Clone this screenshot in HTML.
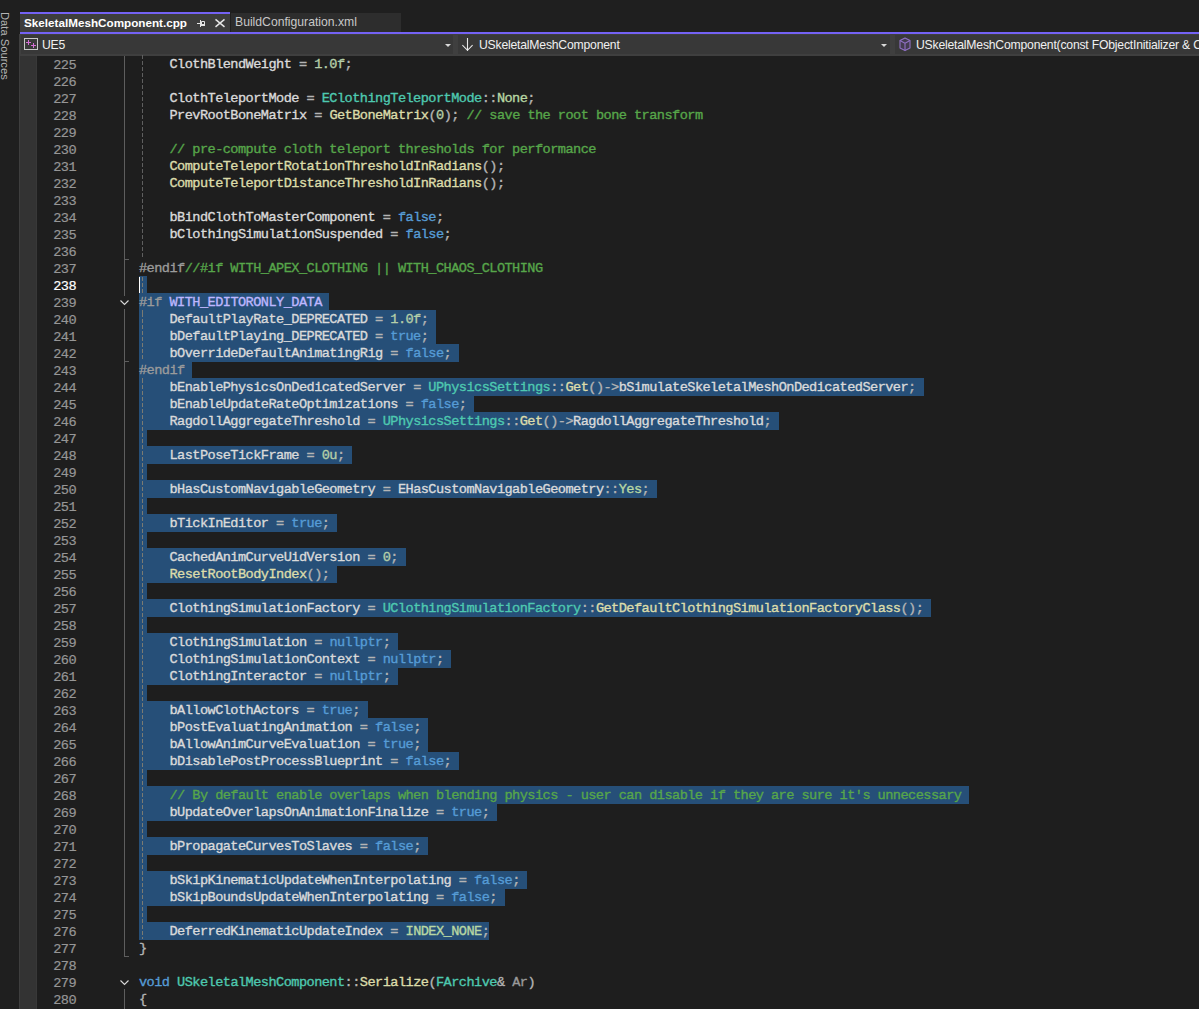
<!DOCTYPE html>
<html><head><meta charset="utf-8">
<style>
html,body{margin:0;padding:0;}
body{width:1199px;height:1009px;overflow:hidden;position:relative;background:#1f1f1f;font-family:"Liberation Sans",sans-serif;}
.abs{position:absolute;}
#side{position:absolute;left:0;top:0;width:19px;height:1009px;background:#1f1f1f;}
#side .vt{position:absolute;left:-29px;top:40px;width:68px;height:12px;transform:rotate(90deg);color:#b4b4b4;font-size:11.2px;line-height:12px;white-space:nowrap;}
#tabwell{position:absolute;left:19px;top:0;width:1180px;height:32px;background:#1f1f1f;}
#tab1{position:absolute;left:20px;top:12px;width:210px;height:20px;background:#3d3d3d;border-top:2px solid #7462f4;box-sizing:border-box;}
#tab1 .tt{position:absolute;left:4px;top:1px;font-size:11.7px;font-weight:bold;color:#ffffff;line-height:16px;white-space:nowrap;}
#tab2{position:absolute;left:231px;top:13px;width:170px;height:19px;background:#2d2d2d;}
#tab2 .tt{position:absolute;left:4px;top:1px;font-size:12.2px;color:#c8c8c8;line-height:16px;white-space:nowrap;}
#accent{position:absolute;left:20px;top:32px;width:1179px;height:2px;background:#7462f4;}
#toolbar{position:absolute;left:19px;top:34px;width:1180px;height:22px;background:#3f3f3f;}
.dd{position:absolute;top:1px;height:19px;background:#383838;}
.dd .tx{position:absolute;top:2px;font-size:12.2px;letter-spacing:-0.2px;color:#f0f0f0;line-height:16px;white-space:nowrap;}
.tri{position:absolute;top:9px;width:0;height:0;border-left:3px solid transparent;border-right:3px solid transparent;border-top:3px solid #d8d8d8;}
#margin{position:absolute;left:19px;top:56px;width:18px;height:953px;background:#333333;border-left:1px solid #3e3e3e;border-right:1px solid #383838;box-sizing:border-box;}
#editor{position:absolute;left:37px;top:56px;width:1162px;height:953px;background:#1e1e1e;}
.ln{position:absolute;left:39px;width:37px;text-align:right;height:17px;font-family:"Liberation Mono",monospace;font-size:13.6px;letter-spacing:-0.543px;line-height:17px;color:#969696;padding-top:2px;box-sizing:border-box;-webkit-text-stroke:0.2px;}
.ln.cur{color:#ffffff;}
.sel{position:absolute;left:139px;height:18px;background:#264f78;}
.cl{position:absolute;left:139px;height:17px;font-family:"Liberation Mono",monospace;font-size:13.6px;letter-spacing:-0.543px;line-height:17px;white-space:pre;color:#dadada;padding-top:1px;box-sizing:border-box;-webkit-text-stroke:0.35px;}
.i{color:#dadada}.p{color:#b4b4b4}.n{color:#b5cea8}.t{color:#4ec9b0}.e{color:#b8d7a3}.f{color:#dcdcaa}.c{color:#57a64a}.k{color:#569cd6}.pp{color:#9b9b9b}.m{color:#beb7ff}.m2{color:#b8d7a3}.pa{color:#9a9a9a}
.guide{position:absolute;left:142px;width:1px;}
.oline{position:absolute;left:124px;width:1px;background:#5e5e5e;}
.otick{position:absolute;left:124px;width:5px;height:1px;background:#5e5e5e;}
#cursor{position:absolute;left:139px;top:277px;width:1px;height:16px;background:#ffffff;}
</style></head><body>
<div id="side"><div class="vt">Data Sources</div></div>
<div id="tabwell"></div>
<div id="tab1"><div class="tt">SkeletalMeshComponent.cpp</div>
<svg class="abs" style="left:176px;top:5px" width="10" height="9" viewBox="0 0 10 9"><path d="M1 4.5H4M4.5 1V8M5.5 2.5H8.5V6.5H5.5Z" fill="none" stroke="#e6e6e6" stroke-width="1"/><rect x="5" y="5" width="4" height="2" fill="#e6e6e6"/></svg>
<svg class="abs" style="left:194px;top:4px" width="12" height="10" viewBox="0 0 12 10"><path d="M1.5 1.3L10.5 8.8M10.5 1.3L1.5 8.8" fill="none" stroke="#e6e6e6" stroke-width="1.5"/></svg>
</div>
<div id="tab2"><div class="tt">BuildConfiguration.xml</div></div>
<div id="accent"></div>
<div id="toolbar">
 <div class="dd" style="left:2px;width:432px">
  <svg class="abs" style="left:3px;top:3px" width="14" height="12" viewBox="0 0 14 12"><rect x="0.5" y="0.5" width="13" height="11" fill="#3a3a3a" stroke="#c8c8c8" stroke-width="1"/><path d="M4.5 2V7M2 4.5H7M9.5 5V10M7 7.5H12" stroke="#d670d6" stroke-width="1"/></svg>
  <div class="tx" style="left:21px">UE5</div>
  <div class="tri" style="left:424px"></div>
 </div>
 <div class="dd" style="left:439px;width:432px">
  <svg class="abs" style="left:4px;top:3px" width="12" height="14" viewBox="0 0 12 14"><path d="M5.5 0V13M0.4 7.2L5.5 12.3L10.6 7.2" fill="none" stroke="#e8e8e8" stroke-width="1.1"/></svg>
  <div class="tx" style="left:21px">USkeletalMeshComponent</div>
  <div class="tri" style="left:423px"></div>
 </div>
 <div class="dd" style="left:876px;width:320px">
  <svg class="abs" style="left:3px;top:2px" width="14" height="15" viewBox="0 0 14 15"><path d="M7 1L12 3.6V11L7 13.6L2 11V3.6Z" fill="#433c50" stroke="#9070c4" stroke-width="1.1" stroke-linejoin="round"/><path d="M2 3.6L7 6.2L12 3.6M7 6.2V13.6" fill="none" stroke="#9070c4" stroke-width="1.1" stroke-linejoin="round"/></svg>
  <div class="tx" style="left:21px">USkeletalMeshComponent(const FObjectInitializer &amp; ObjectInitializer)</div>
 </div>
</div>
<div id="margin"></div>
<div id="editor"></div>
<div class="ln" style="top:55px">225</div>
<div class="ln" style="top:72px">226</div>
<div class="ln" style="top:89px">227</div>
<div class="ln" style="top:106px">228</div>
<div class="ln" style="top:123px">229</div>
<div class="ln" style="top:140px">230</div>
<div class="ln" style="top:157px">231</div>
<div class="ln" style="top:174px">232</div>
<div class="ln" style="top:191px">233</div>
<div class="ln" style="top:208px">234</div>
<div class="ln" style="top:225px">235</div>
<div class="ln" style="top:242px">236</div>
<div class="ln" style="top:259px">237</div>
<div class="ln cur" style="top:276px">238</div>
<div class="ln" style="top:293px">239</div>
<div class="ln" style="top:310px">240</div>
<div class="ln" style="top:327px">241</div>
<div class="ln" style="top:344px">242</div>
<div class="ln" style="top:361px">243</div>
<div class="ln" style="top:378px">244</div>
<div class="ln" style="top:395px">245</div>
<div class="ln" style="top:412px">246</div>
<div class="ln" style="top:429px">247</div>
<div class="ln" style="top:446px">248</div>
<div class="ln" style="top:463px">249</div>
<div class="ln" style="top:480px">250</div>
<div class="ln" style="top:497px">251</div>
<div class="ln" style="top:514px">252</div>
<div class="ln" style="top:531px">253</div>
<div class="ln" style="top:548px">254</div>
<div class="ln" style="top:565px">255</div>
<div class="ln" style="top:582px">256</div>
<div class="ln" style="top:599px">257</div>
<div class="ln" style="top:616px">258</div>
<div class="ln" style="top:633px">259</div>
<div class="ln" style="top:650px">260</div>
<div class="ln" style="top:667px">261</div>
<div class="ln" style="top:684px">262</div>
<div class="ln" style="top:701px">263</div>
<div class="ln" style="top:718px">264</div>
<div class="ln" style="top:735px">265</div>
<div class="ln" style="top:752px">266</div>
<div class="ln" style="top:769px">267</div>
<div class="ln" style="top:786px">268</div>
<div class="ln" style="top:803px">269</div>
<div class="ln" style="top:820px">270</div>
<div class="ln" style="top:837px">271</div>
<div class="ln" style="top:854px">272</div>
<div class="ln" style="top:871px">273</div>
<div class="ln" style="top:888px">274</div>
<div class="ln" style="top:905px">275</div>
<div class="ln" style="top:922px">276</div>
<div class="ln" style="top:939px">277</div>
<div class="ln" style="top:956px">278</div>
<div class="ln" style="top:973px">279</div>
<div class="ln" style="top:990px">280</div>
<div class="oline" style="top:56px;height:240px"></div>
<div class="otick" style="top:259px"></div>
<svg class="abs" style="left:119px;top:299px" width="11" height="7" viewBox="0 0 11 7"><path d="M1.5 1.5L5.5 5.5L9.5 1.5" fill="none" stroke="#d8d8d8" stroke-width="1.1"/></svg>
<div class="oline" style="top:309px;height:647px"></div>
<div class="otick" style="top:361px"></div>
<div class="otick" style="top:956px"></div>
<svg class="abs" style="left:119px;top:979px" width="11" height="7" viewBox="0 0 11 7"><path d="M1.5 1.5L5.5 5.5L9.5 1.5" fill="none" stroke="#d8d8d8" stroke-width="1.1"/></svg>
<div class="oline" style="top:989px;height:20px"></div>
<div class="sel" style="top:276px;width:7.62px"></div>
<div class="sel" style="top:293px;width:190.43px"></div>
<div class="sel" style="top:310px;width:297.06px"></div>
<div class="sel" style="top:327px;width:297.06px"></div>
<div class="sel" style="top:344px;width:319.91px"></div>
<div class="sel" style="top:361px;width:53.32px"></div>
<div class="sel" style="top:378px;width:784.55px"></div>
<div class="sel" style="top:395px;width:335.15px"></div>
<div class="sel" style="top:412px;width:639.83px"></div>
<div class="sel" style="top:429px;width:7.62px"></div>
<div class="sel" style="top:446px;width:213.28px"></div>
<div class="sel" style="top:463px;width:7.62px"></div>
<div class="sel" style="top:480px;width:517.96px"></div>
<div class="sel" style="top:497px;width:7.62px"></div>
<div class="sel" style="top:514px;width:198.04px"></div>
<div class="sel" style="top:531px;width:7.62px"></div>
<div class="sel" style="top:548px;width:266.60px"></div>
<div class="sel" style="top:565px;width:198.04px"></div>
<div class="sel" style="top:582px;width:7.62px"></div>
<div class="sel" style="top:599px;width:792.17px"></div>
<div class="sel" style="top:616px;width:7.62px"></div>
<div class="sel" style="top:633px;width:258.98px"></div>
<div class="sel" style="top:650px;width:312.30px"></div>
<div class="sel" style="top:667px;width:258.98px"></div>
<div class="sel" style="top:684px;width:7.62px"></div>
<div class="sel" style="top:701px;width:228.51px"></div>
<div class="sel" style="top:718px;width:289.45px"></div>
<div class="sel" style="top:735px;width:289.45px"></div>
<div class="sel" style="top:752px;width:319.91px"></div>
<div class="sel" style="top:769px;width:7.62px"></div>
<div class="sel" style="top:786px;width:830.25px"></div>
<div class="sel" style="top:803px;width:358.00px"></div>
<div class="sel" style="top:820px;width:7.62px"></div>
<div class="sel" style="top:837px;width:289.45px"></div>
<div class="sel" style="top:854px;width:7.62px"></div>
<div class="sel" style="top:871px;width:388.47px"></div>
<div class="sel" style="top:888px;width:365.62px"></div>
<div class="sel" style="top:905px;width:7.62px"></div>
<div class="sel" style="top:922px;width:350.38px"></div>
<div class="guide" style="top:55px;height:204px;background:repeating-linear-gradient(to bottom,#5f5f5f 0 4px,transparent 4px 6px);background-position:0 0px"></div>
<div class="guide" style="top:276px;height:17px;background:repeating-linear-gradient(to bottom,#7a7a72 0 4px,transparent 4px 6px);background-position:0 1px"></div>
<div class="guide" style="top:310px;height:51px;background:repeating-linear-gradient(to bottom,#7a7a72 0 4px,transparent 4px 6px);background-position:0 3px"></div>
<div class="guide" style="top:378px;height:561px;background:repeating-linear-gradient(to bottom,#7a7a72 0 4px,transparent 4px 6px);background-position:0 1px"></div>
<div class="cl" style="top:55px"><span class="i">    ClothBlendWeight</span><span class="p"> = </span><span class="n">1.0f</span><span class="p">;</span></div>
<div class="cl" style="top:72px"></div>
<div class="cl" style="top:89px"><span class="i">    ClothTeleportMode</span><span class="p"> = </span><span class="t">EClothingTeleportMode</span><span class="p">::</span><span class="e">None</span><span class="p">;</span></div>
<div class="cl" style="top:106px"><span class="i">    PrevRootBoneMatrix</span><span class="p"> = </span><span class="f">GetBoneMatrix</span><span class="p">(</span><span class="n">0</span><span class="p">);</span><span class="c"> // save the root bone transform</span></div>
<div class="cl" style="top:123px"></div>
<div class="cl" style="top:140px"><span class="c">    // pre-compute cloth teleport thresholds for performance</span></div>
<div class="cl" style="top:157px"><span class="f">    ComputeTeleportRotationThresholdInRadians</span><span class="p">();</span></div>
<div class="cl" style="top:174px"><span class="f">    ComputeTeleportDistanceThresholdInRadians</span><span class="p">();</span></div>
<div class="cl" style="top:191px"></div>
<div class="cl" style="top:208px"><span class="i">    bBindClothToMasterComponent</span><span class="p"> = </span><span class="k">false</span><span class="p">;</span></div>
<div class="cl" style="top:225px"><span class="i">    bClothingSimulationSuspended</span><span class="p"> = </span><span class="k">false</span><span class="p">;</span></div>
<div class="cl" style="top:242px"></div>
<div class="cl" style="top:259px"><span class="pp">#endif</span><span class="c">//#if WITH_APEX_CLOTHING || WITH_CHAOS_CLOTHING</span></div>
<div class="cl" style="top:276px"></div>
<div class="cl" style="top:293px"><span class="pp">#if </span><span class="m">WITH_EDITORONLY_DATA</span></div>
<div class="cl" style="top:310px"><span class="i">    DefaultPlayRate_DEPRECATED</span><span class="p"> = </span><span class="n">1.0f</span><span class="p">;</span></div>
<div class="cl" style="top:327px"><span class="i">    bDefaultPlaying_DEPRECATED</span><span class="p"> = </span><span class="k">true</span><span class="p">;</span></div>
<div class="cl" style="top:344px"><span class="i">    bOverrideDefaultAnimatingRig</span><span class="p"> = </span><span class="k">false</span><span class="p">;</span></div>
<div class="cl" style="top:361px"><span class="pp">#endif</span></div>
<div class="cl" style="top:378px"><span class="i">    bEnablePhysicsOnDedicatedServer</span><span class="p"> = </span><span class="t">UPhysicsSettings</span><span class="p">::</span><span class="f">Get</span><span class="p">()-&gt;</span><span class="i">bSimulateSkeletalMeshOnDedicatedServer</span><span class="p">;</span></div>
<div class="cl" style="top:395px"><span class="i">    bEnableUpdateRateOptimizations</span><span class="p"> = </span><span class="k">false</span><span class="p">;</span></div>
<div class="cl" style="top:412px"><span class="i">    RagdollAggregateThreshold</span><span class="p"> = </span><span class="t">UPhysicsSettings</span><span class="p">::</span><span class="f">Get</span><span class="p">()-&gt;</span><span class="i">RagdollAggregateThreshold</span><span class="p">;</span></div>
<div class="cl" style="top:429px"></div>
<div class="cl" style="top:446px"><span class="i">    LastPoseTickFrame</span><span class="p"> = </span><span class="n">0u</span><span class="p">;</span></div>
<div class="cl" style="top:463px"></div>
<div class="cl" style="top:480px"><span class="i">    bHasCustomNavigableGeometry</span><span class="p"> = </span><span class="i">EHasCustomNavigableGeometry</span><span class="p">::</span><span class="e">Yes</span><span class="p">;</span></div>
<div class="cl" style="top:497px"></div>
<div class="cl" style="top:514px"><span class="i">    bTickInEditor</span><span class="p"> = </span><span class="k">true</span><span class="p">;</span></div>
<div class="cl" style="top:531px"></div>
<div class="cl" style="top:548px"><span class="i">    CachedAnimCurveUidVersion</span><span class="p"> = </span><span class="n">0</span><span class="p">;</span></div>
<div class="cl" style="top:565px"><span class="f">    ResetRootBodyIndex</span><span class="p">();</span></div>
<div class="cl" style="top:582px"></div>
<div class="cl" style="top:599px"><span class="i">    ClothingSimulationFactory</span><span class="p"> = </span><span class="t">UClothingSimulationFactory</span><span class="p">::</span><span class="f">GetDefaultClothingSimulationFactoryClass</span><span class="p">();</span></div>
<div class="cl" style="top:616px"></div>
<div class="cl" style="top:633px"><span class="i">    ClothingSimulation</span><span class="p"> = </span><span class="k">nullptr</span><span class="p">;</span></div>
<div class="cl" style="top:650px"><span class="i">    ClothingSimulationContext</span><span class="p"> = </span><span class="k">nullptr</span><span class="p">;</span></div>
<div class="cl" style="top:667px"><span class="i">    ClothingInteractor</span><span class="p"> = </span><span class="k">nullptr</span><span class="p">;</span></div>
<div class="cl" style="top:684px"></div>
<div class="cl" style="top:701px"><span class="i">    bAllowClothActors</span><span class="p"> = </span><span class="k">true</span><span class="p">;</span></div>
<div class="cl" style="top:718px"><span class="i">    bPostEvaluatingAnimation</span><span class="p"> = </span><span class="k">false</span><span class="p">;</span></div>
<div class="cl" style="top:735px"><span class="i">    bAllowAnimCurveEvaluation</span><span class="p"> = </span><span class="k">true</span><span class="p">;</span></div>
<div class="cl" style="top:752px"><span class="i">    bDisablePostProcessBlueprint</span><span class="p"> = </span><span class="k">false</span><span class="p">;</span></div>
<div class="cl" style="top:769px"></div>
<div class="cl" style="top:786px"><span class="c">    // By default enable overlaps when blending physics - user can disable if they are sure it&#x27;s unnecessary</span></div>
<div class="cl" style="top:803px"><span class="i">    bUpdateOverlapsOnAnimationFinalize</span><span class="p"> = </span><span class="k">true</span><span class="p">;</span></div>
<div class="cl" style="top:820px"></div>
<div class="cl" style="top:837px"><span class="i">    bPropagateCurvesToSlaves</span><span class="p"> = </span><span class="k">false</span><span class="p">;</span></div>
<div class="cl" style="top:854px"></div>
<div class="cl" style="top:871px"><span class="i">    bSkipKinematicUpdateWhenInterpolating</span><span class="p"> = </span><span class="k">false</span><span class="p">;</span></div>
<div class="cl" style="top:888px"><span class="i">    bSkipBoundsUpdateWhenInterpolating</span><span class="p"> = </span><span class="k">false</span><span class="p">;</span></div>
<div class="cl" style="top:905px"></div>
<div class="cl" style="top:922px"><span class="i">    DeferredKinematicUpdateIndex</span><span class="p"> = </span><span class="m2">INDEX_NONE</span><span class="p">;</span></div>
<div class="cl" style="top:939px"><span class="p">}</span></div>
<div class="cl" style="top:956px"></div>
<div class="cl" style="top:973px"><span class="k">void </span><span class="t">USkeletalMeshComponent</span><span class="p">::</span><span class="f">Serialize</span><span class="p">(</span><span class="t">FArchive</span><span class="p">&amp; </span><span class="pa">Ar</span><span class="p">)</span></div>
<div class="cl" style="top:990px"><span class="p">{</span></div>
<div id="cursor"></div>
</body></html>
